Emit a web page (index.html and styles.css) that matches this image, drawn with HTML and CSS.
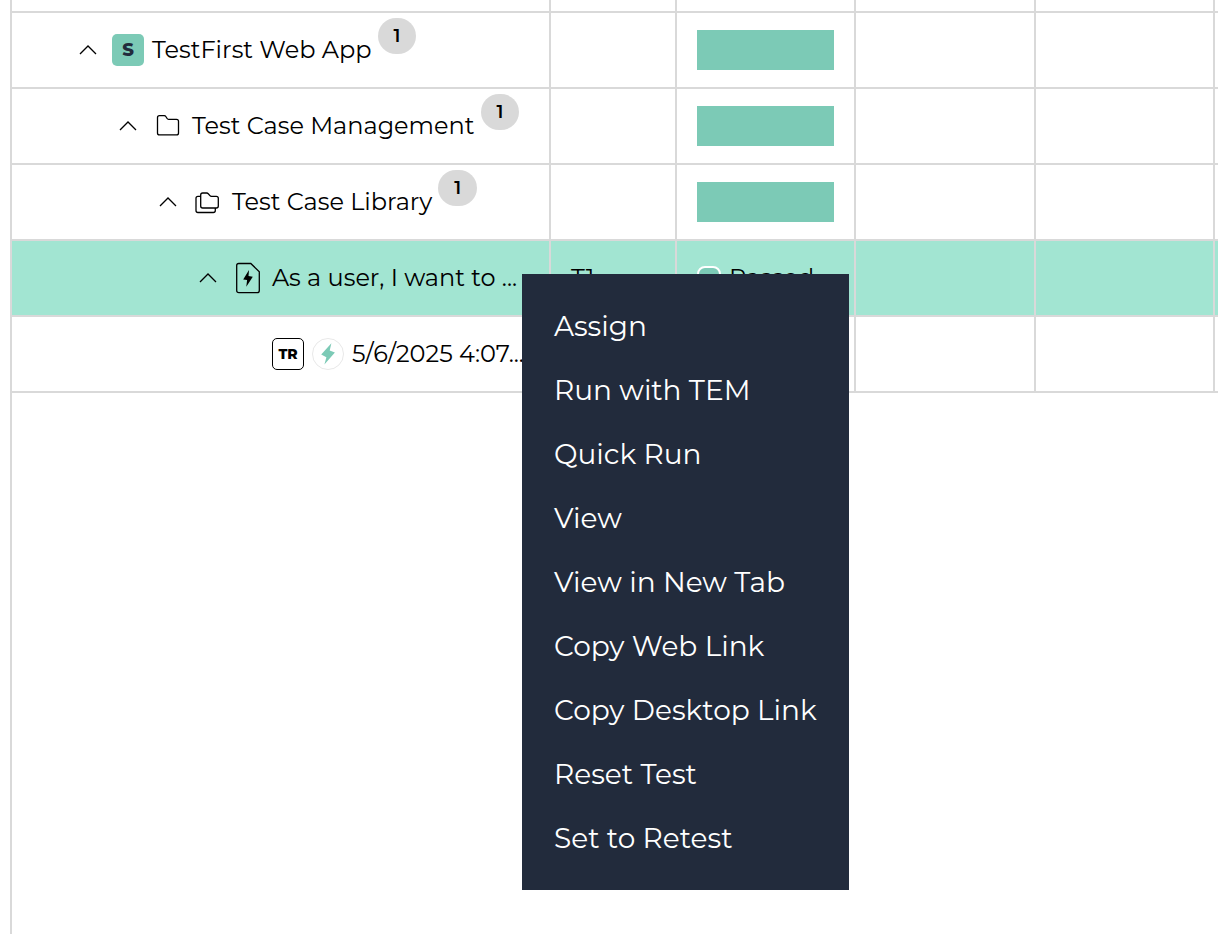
FILE: index.html
```html
<!DOCTYPE html>
<html lang="en">
<head>
  <meta charset="UTF-8" />
  <meta name="viewport" content="width=device-width, initial-scale=1.0"/>
  <title>TestFirst Web App</title>
  <link rel="stylesheet" href="styles.css">
</head>
<body>
  <main class="panel">
    <table class="tree">
      <colgroup>
        <col class="col-name">
        <col class="col-id">
        <col class="col-status">
        <col class="col-mid">
        <col class="col-status">
        <col>
      </colgroup>
      <tbody>
        <tr class="row-cut"><td></td><td></td><td></td><td></td><td></td><td></td></tr>
        <tr>
          <td>
            <div class="node level-1">
              <button class="toggle" aria-label="Collapse"><svg viewBox="0 0 32 32"><path d="M8 20l8-8 8 8"/></svg></button>
              <span class="system">S</span>
              <span class="label">TestFirst Web App</span>
              <span class="badge">1</span>
            </div>
          </td>
          <td></td>
          <td><div class="bar"></div></td>
          <td></td><td></td><td></td>
        </tr>
        <tr>
          <td>
            <div class="node level-2">
              <button class="toggle" aria-label="Collapse"><svg viewBox="0 0 32 32"><path d="M8 20l8-8 8 8"/></svg></button>
              <svg class="icon" viewBox="0 0 32 32"><path d="M7.500 5.700h4.800q1 0 1.500.8l1.300 2q.5.8 1.500.8h7.900q2 0 2 2v11.600q0 2-2 2h-17q-2 0-2-2V7.700q0-2 2-2z"/></svg>
              <span class="label">Test Case Management</span>
              <span class="badge">1</span>
            </div>
          </td>
          <td></td>
          <td><div class="bar"></div></td>
          <td></td><td></td><td></td>
        </tr>
        <tr>
          <td>
            <div class="node level-3">
              <button class="toggle" aria-label="Collapse"><svg viewBox="0 0 32 32"><path d="M8 20l8-8 8 8"/></svg></button>
              <svg class="icon" viewBox="0 0 32 32"><path d="M10.700 7h4q1 0 1.600.8l1.600 1.800q.6.7 1.600.7h4.800q2 0 2 2v7.700q0 2-2 2H10.700q-2 0-2-2V9q0-2 2-2zM8.700 10.300H6q-2 0-2 2v12.200q0 2 2 2h15.300q2 0 2-2V22"/></svg>
              <span class="label">Test Case Library</span>
              <span class="badge">1</span>
            </div>
          </td>
          <td></td>
          <td><div class="bar"></div></td>
          <td></td><td></td><td></td>
        </tr>
        <tr class="selected">
          <td>
            <div class="node level-4">
              <button class="toggle" aria-label="Collapse"><svg viewBox="0 0 32 32"><path d="M8 20l8-8 8 8"/></svg></button>
              <svg class="icon" viewBox="0 0 32 32"><path d="M6.700 1.500h12.100l8.500 8.200v18.800q0 2.200-2.200 2.200H6.900q-2.200 0-2.200-2.200V3.500q0-2 2-2z"/><path class="solid" d="M17 8l-5.800 9.500 3.900.6-.8 6.700 6.500-10-4.300-.7z"/></svg>
              <span class="label">As a user, I want to ...</span>
            </div>
          </td>
          <td>T1</td>
          <td><div class="status"><span class="swatch"></span>Passed</div></td>
          <td></td><td></td><td></td>
        </tr>
        <tr>
          <td>
            <div class="node level-5">
              <span class="result">TR</span>
              <svg class="icon" viewBox="0 0 32 32"><circle class="ring" cx="16" cy="16" r="15.500"/><path class="bolt" d="M19.400 5.200L9.200 16.500l5.200 2.700-2 7.400L22.900 14.500l-5.200-1.900z"/></svg>
              <span class="label">5/6/2025 4:07...</span>
            </div>
          </td>
          <td></td><td></td><td></td><td></td><td></td>
        </tr>
      </tbody>
    </table>
  </main>

  <div class="menu" role="menu">
    <button role="menuitem">Assign</button>
    <button role="menuitem">Run with TEM</button>
    <button role="menuitem">Quick Run</button>
    <button role="menuitem">View</button>
    <button role="menuitem">View in New Tab</button>
    <button role="menuitem">Copy Web Link</button>
    <button role="menuitem">Copy Desktop Link</button>
    <button role="menuitem">Reset Test</button>
    <button role="menuitem">Set to Retest</button>
  </div>
</body>
</html>
```
FILE: styles.css
```css
:root {
  --line: #d9d9d9;
  --green: #7ccab6;
  --green-light: #a2e5d2;
  --navy: #222b3c;
}

* {
  box-sizing: border-box;
}

body {
  margin: 0;
  font-family: Montserrat, Inter, sans-serif;
  font-size: 24px;
  line-height: 32px;
  color: #000;
  background: #fff;
}

button {
  padding: 0;
  border: none;
  background: none;
  font: inherit;
  color: inherit;
  cursor: pointer;
}

.panel {
  min-height: 100vh;
  margin-left: 10px;
  border-left: 2px solid var(--line);
  overflow: hidden;
}

.tree {
  width: 100%;
  table-layout: fixed;
  border-collapse: separate;
  border-spacing: 0;
}

.col-name {
  width: 539px;
}

.col-id {
  width: 126px;
}

.col-status {
  width: 179px;
}

.col-mid {
  width: 180px;
}

.tree td {
  height: 76px;
  padding: 0 20px;
  border-right: 2px solid var(--line);
  border-bottom: 2px solid var(--line);
  white-space: nowrap;
}

.tree td:first-child {
  padding: 0;
}

.tree td:last-child {
  padding: 0;
  border-right: none;
}

.tree .row-cut td {
  height: 13px;
}

.selected {
  background: var(--green-light);
}

.node {
  display: flex;
  align-items: center;
  gap: 8px;
}

.level-1 { padding-left: 60px; }
.level-2 { padding-left: 100px; }
.level-3 { padding-left: 140px; }
.level-4 { padding-left: 180px; }
.level-5 { padding-left: 260px; }

.toggle,
.icon,
.system,
.result {
  flex: none;
  width: 32px;
  height: 32px;
}

.toggle svg {
  display: block;
}

.toggle svg,
.icon {
  fill: none;
  stroke: #000;
  stroke-width: 1.3;
}

.icon .solid {
  fill: #000;
  stroke: none;
}

.icon .bolt {
  fill: var(--green);
  stroke: none;
}

.icon .ring {
  stroke: #e8e8e8;
  stroke-width: 1;
}

.system,
.result {
  display: flex;
  align-items: center;
  justify-content: center;
  border-radius: 5px;
}

.system {
  background: var(--green);
  color: var(--navy);
  font-size: 18px;
  font-weight: 800;
}

.result {
  border: 1px solid #000;
  font-size: 14px;
  font-weight: 800;
}

.badge {
  margin-bottom: 28px;
  margin-left: -2px;
  padding: 0 16px;
  border-radius: 18px;
  background: var(--line);
  font-size: 18px;
  font-weight: 600;
  line-height: 36px;
}

.bar {
  height: 40px;
  background: var(--green);
}

.status {
  display: flex;
  align-items: center;
  gap: 8px;
}

.swatch {
  width: 24px;
  height: 24px;
  border: 2px solid #fff;
  border-radius: 8px;
  background: var(--green);
}

/* context menu over the selected row */
.menu {
  position: absolute;
  top: 274px;
  left: 522px;
  display: flex;
  flex-direction: column;
  width: 327px;
  padding: 20px 0;
  background: var(--navy);
  color: #fff;
  font-size: 28px;
}

.menu button {
  height: 64px;
  padding: 0 32px;
  text-align: left;
  white-space: nowrap;
}
```
